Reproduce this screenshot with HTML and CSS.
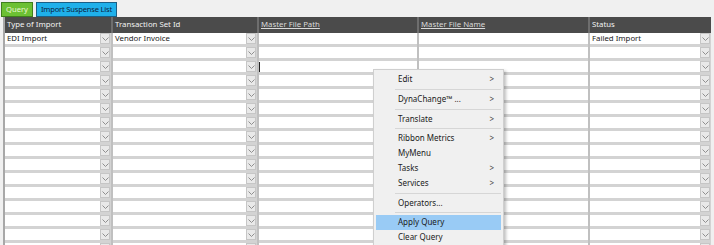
FILE: index.html
```html
<!DOCTYPE html>
<html lang="en">
<head>
    <meta charset="UTF-8">
    <meta name="viewport" content="width=device-width, initial-scale=1.0">
    <title>Import Suspense List</title>
    <link rel="stylesheet" href="styles.css">
</head>
<body>
    <!-- Tabs -->
    <div class="tabs">
        <div class="tab tab-query">Query</div>
        <div class="tab tab-list">Import Suspense List</div>
    </div>

    <!-- Grid -->
    <div class="grid" id="grid">
        <div class="head">Type of Import</div>
        <div class="head">Transaction Set Id</div>
        <div class="head link">Master File Path</div>
        <div class="head link">Master File Name</div>
        <div class="head">Status</div>
    </div>

    <!-- Context Menu -->
    <div class="menu">
        <div class="menu-item">Edit<span class="arrow">&gt;</span></div>
        <div class="menu-sep"></div>
        <div class="menu-item">DynaChange&trade; ...<span class="arrow">&gt;</span></div>
        <div class="menu-sep"></div>
        <div class="menu-item">Translate<span class="arrow">&gt;</span></div>
        <div class="menu-sep"></div>
        <div class="menu-item">Ribbon Metrics<span class="arrow">&gt;</span></div>
        <div class="menu-item">MyMenu</div>
        <div class="menu-item">Tasks<span class="arrow">&gt;</span></div>
        <div class="menu-item">Services<span class="arrow">&gt;</span></div>
        <div class="menu-sep"></div>
        <div class="menu-item">Operators...</div>
        <div class="menu-sep"></div>
        <div class="menu-item active">Apply Query</div>
        <div class="menu-item">Clear Query</div>
    </div>

    <script>
        // Build the grid rows
        const grid = document.getElementById('grid');
        const firstRow = ['EDI Import', 'Vendor Invoice', '', '', 'Failed Import'];
        const hasDrop = [true, true, false, false, true];
        const chevron = '<svg width="7" height="4" viewBox="0 0 7 4"><polyline points="0.5,0.5 3.5,3.5 6.5,0.5" fill="none" stroke="#8f8f8f" stroke-width="1"/></svg>';

        for (let r = 0; r < 16; r++) {
            for (let c = 0; c < 5; c++) {
                const cell = document.createElement('div');
                cell.className = 'cell';
                const text = document.createElement('span');
                text.className = 'cell-text';
                text.textContent = r === 0 ? firstRow[c] : '';
                cell.appendChild(text);
                // focused cell shows a text cursor
                if (r === 2 && c === 2) {
                    const caret = document.createElement('span');
                    caret.className = 'caret';
                    cell.appendChild(caret);
                }
                if (hasDrop[c]) {
                    const drop = document.createElement('span');
                    drop.className = 'drop';
                    drop.innerHTML = chevron;
                    cell.appendChild(drop);
                }
                grid.appendChild(cell);
            }
        }
    </script>
</body>
</html>
```

FILE: styles.css
```css
body {
    margin: 0;
    height: 245px;
    overflow: hidden;
    background: #f0f0f0;
    font-family: "Noto Sans", "Liberation Sans", sans-serif;
    font-size: 7.8px;
    color: #1a1a1a;
}

/* Tabs */
.tabs {
    display: flex;
    gap: 3px;
    padding: 2px 0 0 1px;
    height: 16px;
    box-sizing: border-box;
}

.tab {
    height: 15px;
    line-height: 13px;
    box-sizing: border-box;
    text-align: center;
    white-space: nowrap;
    overflow: hidden;
    font-size: 7.6px;
}

.tab-query {
    width: 32px;
    background: #6cc033;
    border: 1px solid #3f7f1c;
    color: #eaf7d2;
}

.tab-list {
    width: 81px;
    background: #1fb0ea;
    border: 1px solid #1b5f86;
    color: #0c2440;
    letter-spacing: -0.2px;
}

/* Grid */
.grid {
    display: grid;
    grid-template-columns: 106px 146px 160px 171px 123px;
    grid-template-rows: 16px;
    grid-auto-rows: 14px;
    margin: 1px 0 0 3px;
    border-left: 2px solid #a8a8a8;
}

.head {
    line-height: 15px;
    background: #4b4b4b;
    color: #f2f2f2;
    padding-left: 2px;
    border-left: 2px solid #6e6e6e;
    white-space: nowrap;
    overflow: hidden;
}

.head:first-child {
    border-left: none;
}

.head.link {
    color: #dadada;
    text-decoration: underline;
}

.cell {
    position: relative;
    display: flex;
    align-items: flex-start;
    background: #d3d3d3;
    border-left: 2px solid #c0c0c0;
}

.cell:nth-child(5n+1) {
    border-left: none;
}

.cell-text {
    flex: 1;
    height: 11px;
    line-height: 11px;
    background: #fff;
    padding-left: 2px;
    white-space: nowrap;
    overflow: hidden;
}

.drop {
    width: 10px;
    height: 11px;
    box-sizing: border-box;
    background: #e9e9e9;
    border: 1px solid #c6c6c6;
    display: flex;
    align-items: center;
    justify-content: center;
    margin-right: 1px;
}

.caret {
    position: absolute;
    left: 0;
    top: 1px;
    width: 1px;
    height: 10px;
    background: #222;
}

/* Context Menu */
.menu {
    position: absolute;
    left: 373px;
    top: 69px;
    width: 131px;
    height: 190px;
    box-sizing: border-box;
    padding: 2px 2px;
    background: #f0f0f0;
    border: 1px solid #cfcfcf;
    box-shadow: 2px 2px 3px rgba(0, 0, 0, 0.25);
    font-size: 8px;
}

.menu-item {
    position: relative;
    height: 14.8px;
    line-height: 14.8px;
    padding-left: 22px;
    color: #1a1a1a;
}

.menu-item.active {
    background: #99cbf5;
}

.arrow {
    position: absolute;
    right: 7px;
    top: 0;
    color: #444;
}

.menu-sep {
    height: 1px;
    margin: 2px 0 2px 19px;
    background: #d6d6d6;
}
```
